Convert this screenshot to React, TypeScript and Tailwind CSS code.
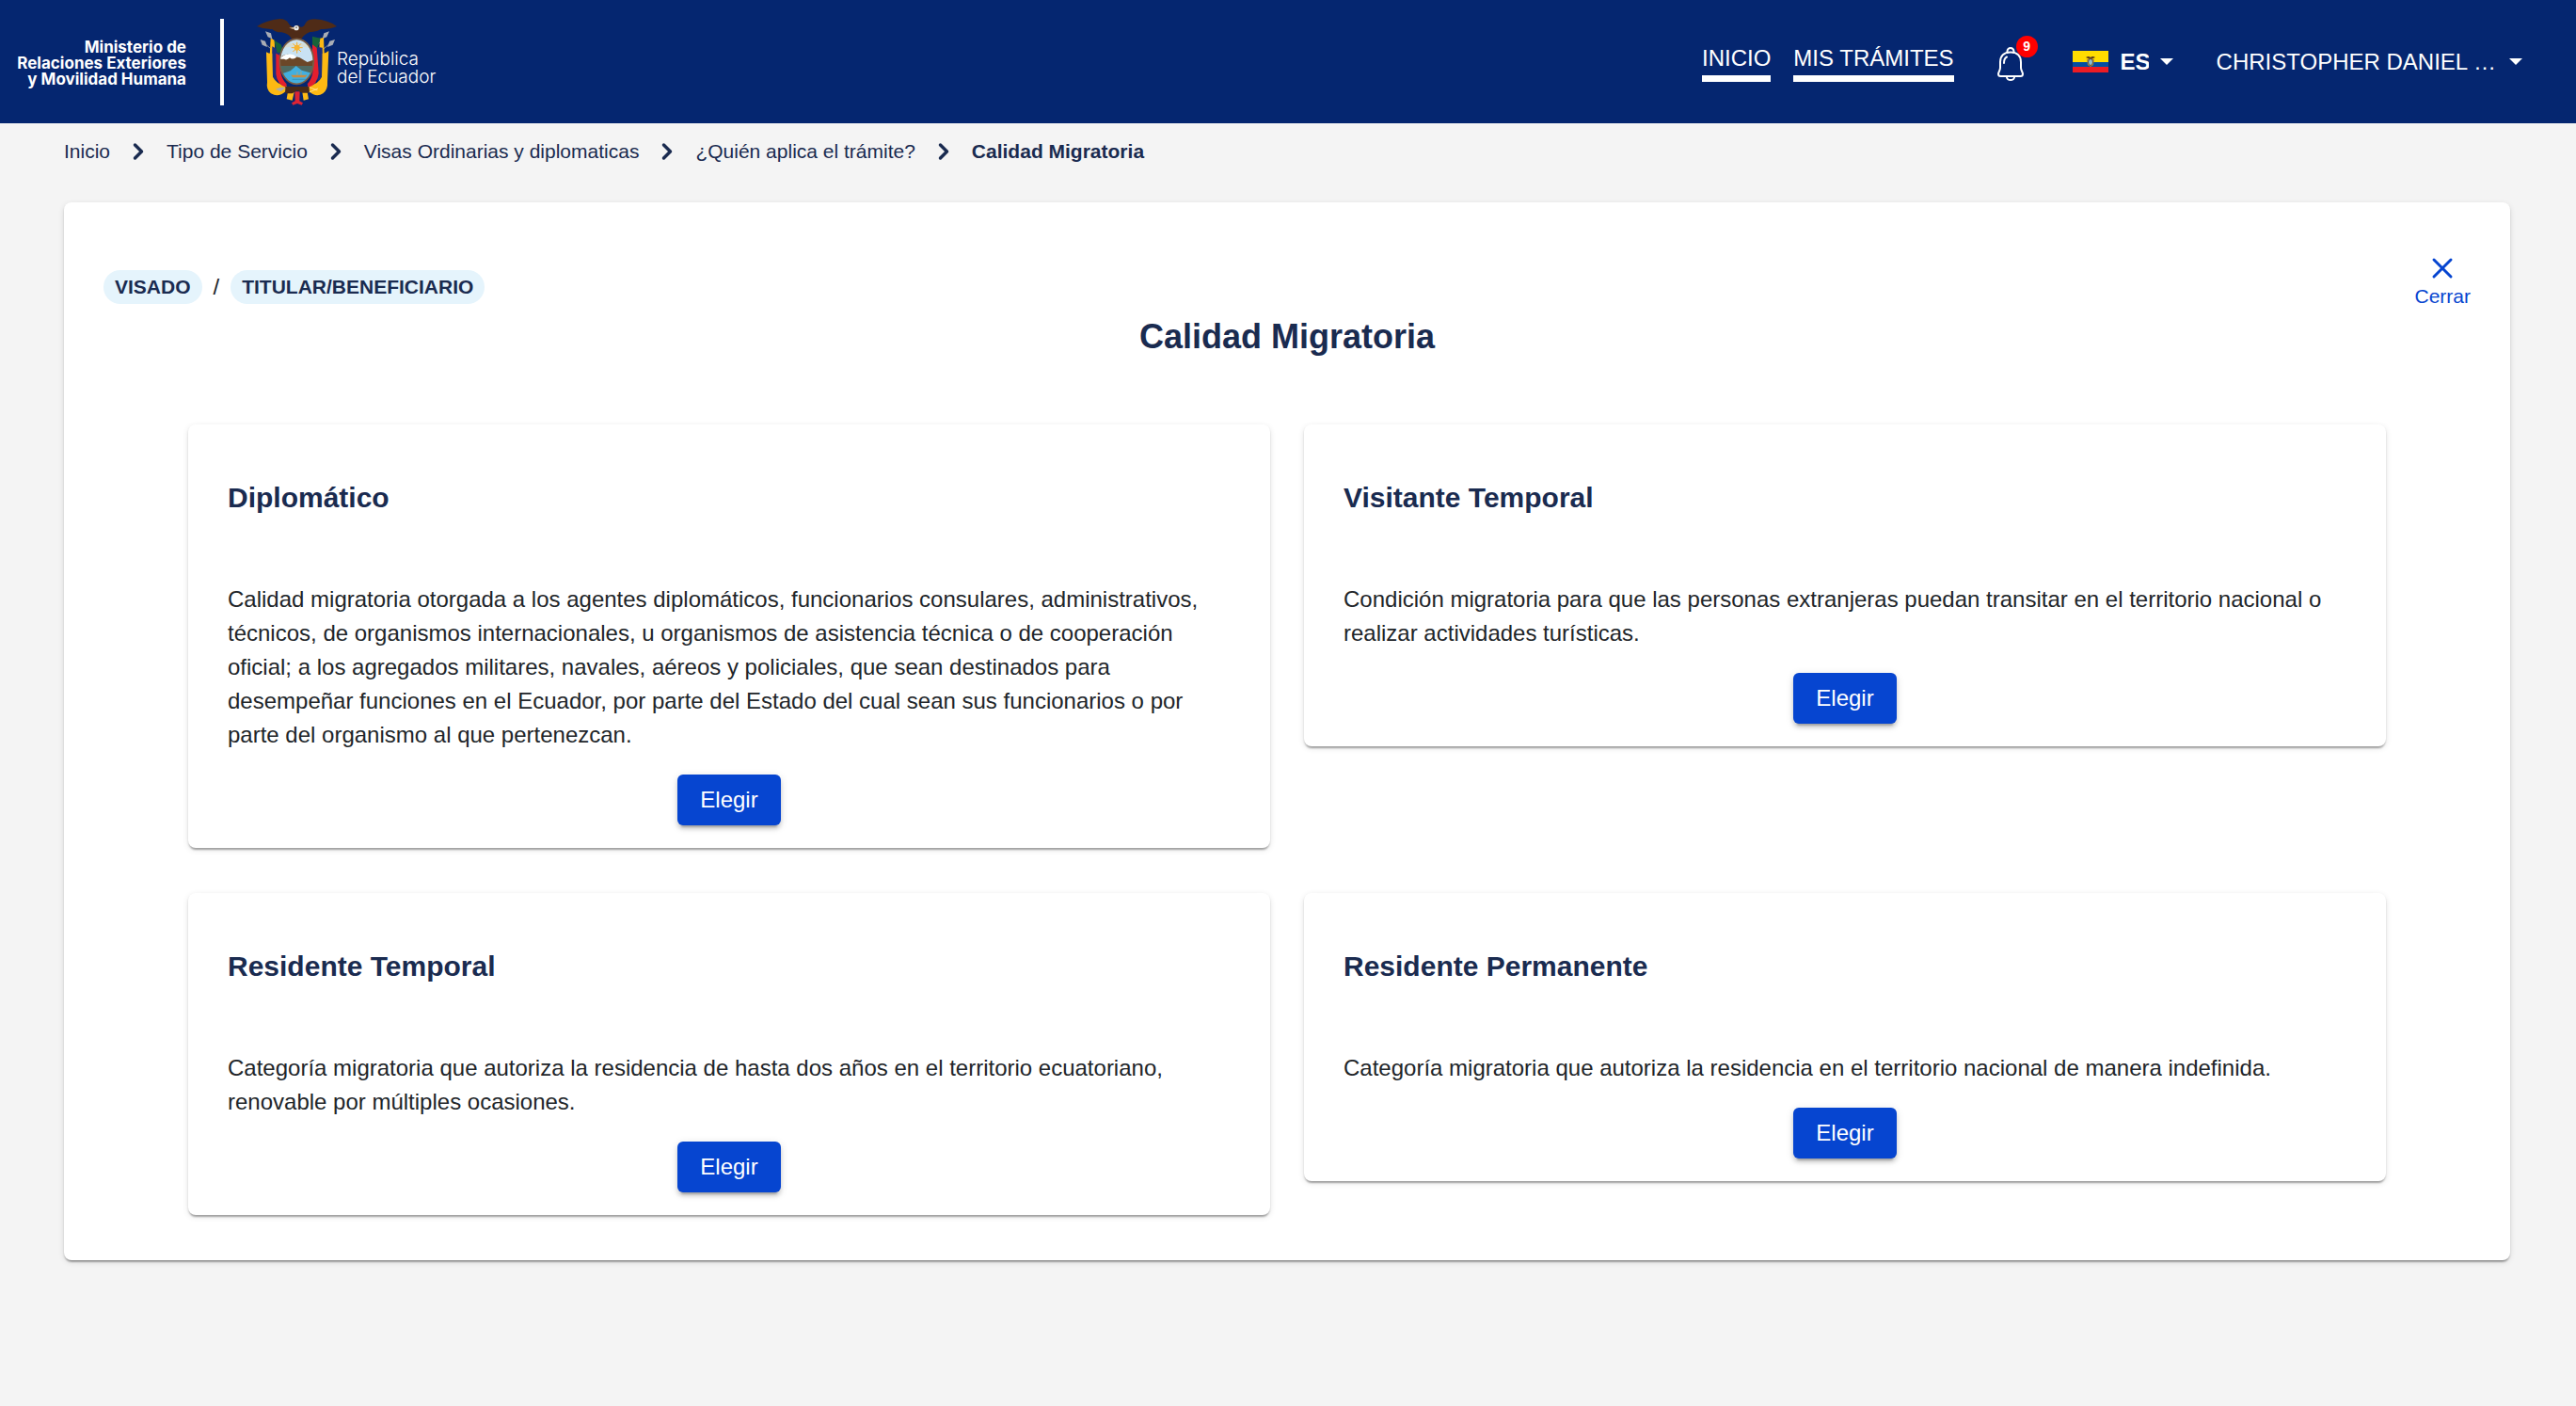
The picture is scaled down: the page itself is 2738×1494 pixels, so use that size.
import { ChevronRight, X } from "lucide-react";

const breadcrumbs = [
  "Inicio",
  "Tipo de Servicio",
  "Visas Ordinarias y diplomaticas",
  "¿Quién aplica el trámite?",
];

const calidades = [
  {
    title: "Diplomático",
    description:
      "Calidad migratoria otorgada a los agentes diplomáticos, funcionarios consulares, administrativos, técnicos, de organismos internacionales, u organismos de asistencia técnica o de cooperación oficial; a los agregados militares, navales, aéreos y policiales, que sean destinados para desempeñar funciones en el Ecuador, por parte del Estado del cual sean sus funcionarios o por parte del organismo al que pertenezcan.",
  },
  {
    title: "Visitante Temporal",
    description:
      "Condición migratoria para que las personas extranjeras puedan transitar en el territorio nacional o realizar actividades turísticas.",
  },
  {
    title: "Residente Temporal",
    description:
      "Categoría migratoria que autoriza la residencia de hasta dos años en el territorio ecuatoriano, renovable por múltiples ocasiones.",
  },
  {
    title: "Residente Permanente",
    description:
      "Categoría migratoria que autoriza la residencia en el territorio nacional de manera indefinida.",
  },
];

function Escudo() {
  return (
    <svg viewBox="39 30 255 276" className="h-[92px] w-[85px] shrink-0" aria-hidden="true">
      {/* lances */}
      <g stroke="#8b8f98" strokeWidth="3">
        <path d="M72 76 L128 142 M56 102 L120 156 M264 76 L208 142 M280 102 L216 156" />
      </g>
      <g fill="#a9adb5">
        <path d="M66 70 L84 76 L88 94 L74 88 Z M50 96 L66 101 L72 120 L56 113 Z" />
        <path d="M270 70 L253 76 L248 94 L262 88 Z M288 96 L271 101 L264 120 L281 113 Z" />
      </g>
      {/* left flags */}
      <path d="M83 92 L95 98 L100 200 L90 210 L78 190 Z" fill="#fdb913" />
      <path d="M88 118 L112 132 L112 200 L100 230 L86 210 Z" fill="#1d2f7c" />
      <path d="M69 136 Q80 142 88 140 L90 215 Q102 240 134 244 L130 262 Q108 282 84 268 Q68 256 72 232 Z" fill="#fdb913" />
      <path d="M100 140 L114 148 Q106 212 134 238 L132 248 Q104 240 100 206 Z" fill="#e31f2d" />
      <path d="M94 98 L116 112 L124 136 L104 138 Z" fill="#176339" />
      {/* right flags */}
      <path d="M240 92 L252 90 L256 190 L246 210 L234 190 Z" fill="#fdb913" />
      <path d="M222 118 L248 122 L250 206 L236 230 L222 210 Z" fill="#1d2f7c" />
      <path d="M268 132 Q256 142 248 140 L246 215 Q234 240 202 244 L206 262 Q228 282 250 268 Q266 256 264 232 Z" fill="#fdb913" />
      <path d="M216 110 L230 120 L236 204 Q232 240 204 248 L200 238 Q226 210 216 148 Z" fill="#e31f2d" />
      <path d="M216 86 L242 92 L232 124 L216 112 Z" fill="#176339" />
      {/* tassels and fasces */}
      <path d="M138 262 L158 264 L152 290 L134 286 Z M184 264 L200 264 L204 286 L188 290 Z" fill="#fdb913" />
      <path d="M160 262 L176 262 L175 292 L186 298 L182 305 L168 300 L154 305 L150 298 L161 292 Z" fill="#dc2434" />
      <path d="M130 246 H206 V266 H184 L168 258 L152 268 H130 Z" fill="#4a2b18" />
      <path d="M206 248 L232 258 M206 264 L234 252" stroke="#fff0c0" strokeWidth="2" />
      <path d="M98 254 L116 248 L130 250 L116 262 Z" fill="#a9adb5" />
      {/* condor */}
      <path
        d="M39 54 Q70 34 112 30 Q132 30 140 44 Q148 58 158 56 Q168 44 178 56 Q188 58 194 44 Q200 31 224 31 Q268 34 294 54 Q272 64 244 63 Q226 74 208 72 Q188 80 182 94 L150 94 Q142 78 118 73 Q100 74 88 63 Q62 64 39 54 Z"
        fill="#4f2b17"
      />
      <circle cx="165" cy="59" r="8" fill="#eef1f3" />
      <circle cx="165" cy="58" r="3" fill="#8c857d" />
      <path d="M158 57 L142 59 L157 63 Z" fill="#e8cfae" />
      {/* oval */}
      <clipPath id="ovalo">
        <ellipse cx="166" cy="166" rx="53" ry="71" />
      </clipPath>
      <g clipPath="url(#ovalo)">
        <rect x="110" y="92" width="112" height="148" fill="#c9e2f3" />
        <path d="M112 116 Q166 98 220 116 L220 126 Q166 110 112 126 Z" fill="#d7ddd2" />
        <path d="M110 168 L120 148 Q138 138 152 148 L176 154 L200 168 L222 160 V196 H110 Z" fill="#6b4728" />
        <path d="M112 158 Q124 142 140 143 Q154 140 166 152 Q152 162 144 154 Q134 164 126 158 Z" fill="#fff" />
        <path d="M110 180 H222 V206 H110 Z" fill="#4e6a62" />
        <path d="M110 208 L146 196 L164 180 L182 194 L222 206 V240 H110 Z" fill="#43afdf" />
        <path d="M148 209 H200 L192 217 H154 Z" fill="#c98b3e" />
        <path d="M168 209 V199 M180 209 V197" stroke="#d6a35b" strokeWidth="2" />
        <path d="M152 223 H204" stroke="#3585a8" strokeWidth="2" />
        <path d="M167 104 V140 M149 122 H185 M154 109 L180 135 M180 109 L154 135" stroke="#f5ad2b" strokeWidth="3" />
        <circle cx="167" cy="122" r="9" fill="#f6b431" />
      </g>
      <ellipse cx="166" cy="166" rx="54" ry="72" fill="none" stroke="#7b5d43" strokeWidth="5" />
    </svg>
  );
}

function Campana() {
  return (
    <svg viewBox="0 0 28 36" className="h-9 w-7" fill="none" stroke="#fff" strokeWidth="2" strokeLinecap="round" strokeLinejoin="round" aria-hidden="true">
      <path d="M10.5 6 V4.5 a3.5 3.5 0 0 1 7 0 V6" />
      <path d="M14 5.5 C7 5.5 3 9.5 3 16 V22 C3 25 1 26.5 1 28.5 Q1 31 3.5 31 H24.5 Q27 31 27 28.5 C27 26.5 25 25 25 22 V16 C25 9.5 21 5.5 14 5.5 Z" />
      <path d="M10 32 a4 3 0 0 0 8 0" />
      <path d="M7 17 C7 13.5 8 11.5 10 10.5" />
    </svg>
  );
}

function Bandera() {
  return (
    <svg viewBox="0 0 38 23" className="h-[23px] w-[38px]" aria-hidden="true">
      <path d="M0 0 H38 V12 H0 Z" fill="#ffdd00" />
      <path d="M0 12 H38 V17 H0 Z" fill="#034ea2" />
      <path d="M0 17 H38 V23 H0 Z" fill="#ed1c24" />
      <path d="M14 7 Q17 5 19 7 Q21 5 24 7 L20 9 H18 Z" fill="#5b3a1c" />
      <path d="M15 9 L16 15 L19 17 L22 15 L23 9 Z" fill="#b08b3a" />
      <ellipse cx="19" cy="12" rx="2.5" ry="3.5" fill="#8fbfd0" stroke="#6b5233" />
    </svg>
  );
}

function Caret() {
  return (
    <svg viewBox="0 0 14 7" className="pointer-events-none h-[7px] w-[14px]" fill="currentColor" aria-hidden="true">
      <path d="M0 0 H14 L7 7 Z" />
    </svg>
  );
}

export default function App() {
  return (
    <div className="min-h-screen bg-[#f4f4f4] font-['Liberation_Sans',Arial,sans-serif] text-[#1a2b50]">
      <header className="flex h-[131px] items-center justify-between bg-[#052670] pr-[57px] pl-[14px] text-white">
        <div className="flex items-center">
          <p className="w-[184px] pt-1 text-right font-['Inter',sans-serif] text-[17px] leading-[17px] font-bold whitespace-nowrap">
            Ministerio de
            <br />
            Relaciones Exteriores
            <br />
            y Movilidad Humana
          </p>
          <div className="mr-[35px] ml-9 h-[92px] w-1 bg-white" />
          <Escudo />
          <p className="pt-3 font-['Inter',sans-serif] text-[19px] leading-[19px] font-light">
            República
            <br />
            del Ecuador
          </p>
        </div>

        <div className="flex items-center">
          <nav className="flex gap-6 pt-1 text-2xl leading-7">
            <a href="#" className="border-b-[7px] border-white pb-1">
              INICIO
            </a>
            <a href="#" className="border-b-[7px] border-white pb-1">
              MIS TRÁMITES
            </a>
          </nav>
          <button type="button" aria-label="Notificaciones" className="relative ml-[46px] pt-1">
            <Campana />
            <span className="absolute -top-2 left-5 flex size-[23px] items-center justify-center rounded-full bg-[#ff0000] text-sm font-bold">
              9
            </span>
          </button>
          <label className="ml-[52px] flex items-center">
            <Bandera />
            <select aria-label="Idioma" className="mr-3 ml-[13px] w-[30px] appearance-none text-2xl font-bold">
              <option>ES</option>
            </select>
            <Caret />
          </label>
          <button type="button" className="ml-[46px] flex items-center gap-[14px] text-2xl">
            CHRISTOPHER DANIEL …
            <Caret />
          </button>
        </div>
      </header>

      <nav aria-label="Ruta" className="pt-[14px] pl-[68px]">
        <ol className="flex items-center text-[21px] leading-8">
          {breadcrumbs.map((item) => (
            <li key={item} className="flex items-center">
              <a href="#">{item}</a>
              <ChevronRight className="mx-4 size-7" strokeWidth={3} />
            </li>
          ))}
          <li className="font-bold" aria-current="page">
            Calidad Migratoria
          </li>
        </ol>
      </nav>

      <main className="mt-[38px] mr-[70px] ml-[68px] rounded-lg bg-white px-[42px] pt-[52px] pb-12 shadow-[0_4px_2px_-2px_rgba(0,0,0,0.2),0_2px_2px_rgba(0,0,0,0.14),0_2px_6px_rgba(0,0,0,0.12)]">
        <div className="flex items-start justify-between">
          <div className="mt-5 flex h-9 items-center gap-3 text-[21px] font-bold">
            <span className="rounded-full bg-[#e5f4fc] px-3 leading-9">VISADO</span>
            <span className="text-2xl font-normal text-[#212529]">/</span>
            <span className="rounded-full bg-[#e5f4fc] px-3 leading-9">TITULAR/BENEFICIARIO</span>
          </div>
          <button type="button" className="flex flex-col items-center text-[21px] leading-6 text-[#0645d0]">
            <X className="size-9" strokeWidth={2} />
            Cerrar
          </button>
        </div>
        <h1 className="mt-[6px] text-center text-4xl leading-[50px] font-bold">Calidad Migratoria</h1>

        <div className="mx-[90px] mt-[68px] grid grid-cols-2 items-start gap-x-9 gap-y-12">
          {calidades.map((item) => (
            <section
              key={item.title}
              className="rounded-lg bg-white px-[42px] pt-[60px] pb-6 shadow-[0_4px_2px_-2px_rgba(0,0,0,0.2),0_2px_2px_rgba(0,0,0,0.14),0_2px_6px_rgba(0,0,0,0.12)]"
            >
              <h2 className="text-3xl leading-9 font-bold">{item.title}</h2>
              <p className="mt-[72px] text-2xl leading-9 text-[#212529]">{item.description}</p>
              <button
                type="button"
                className="mx-auto mt-6 block h-[54px] w-[110px] rounded-md bg-[#0645d0] text-2xl text-white shadow-[0_6px_2px_-4px_rgba(0,0,0,0.2),0_4px_4px_rgba(0,0,0,0.14),0_2px_10px_rgba(0,0,0,0.12)]"
              >
                Elegir
              </button>
            </section>
          ))}
        </div>
      </main>
    </div>
  );
}
